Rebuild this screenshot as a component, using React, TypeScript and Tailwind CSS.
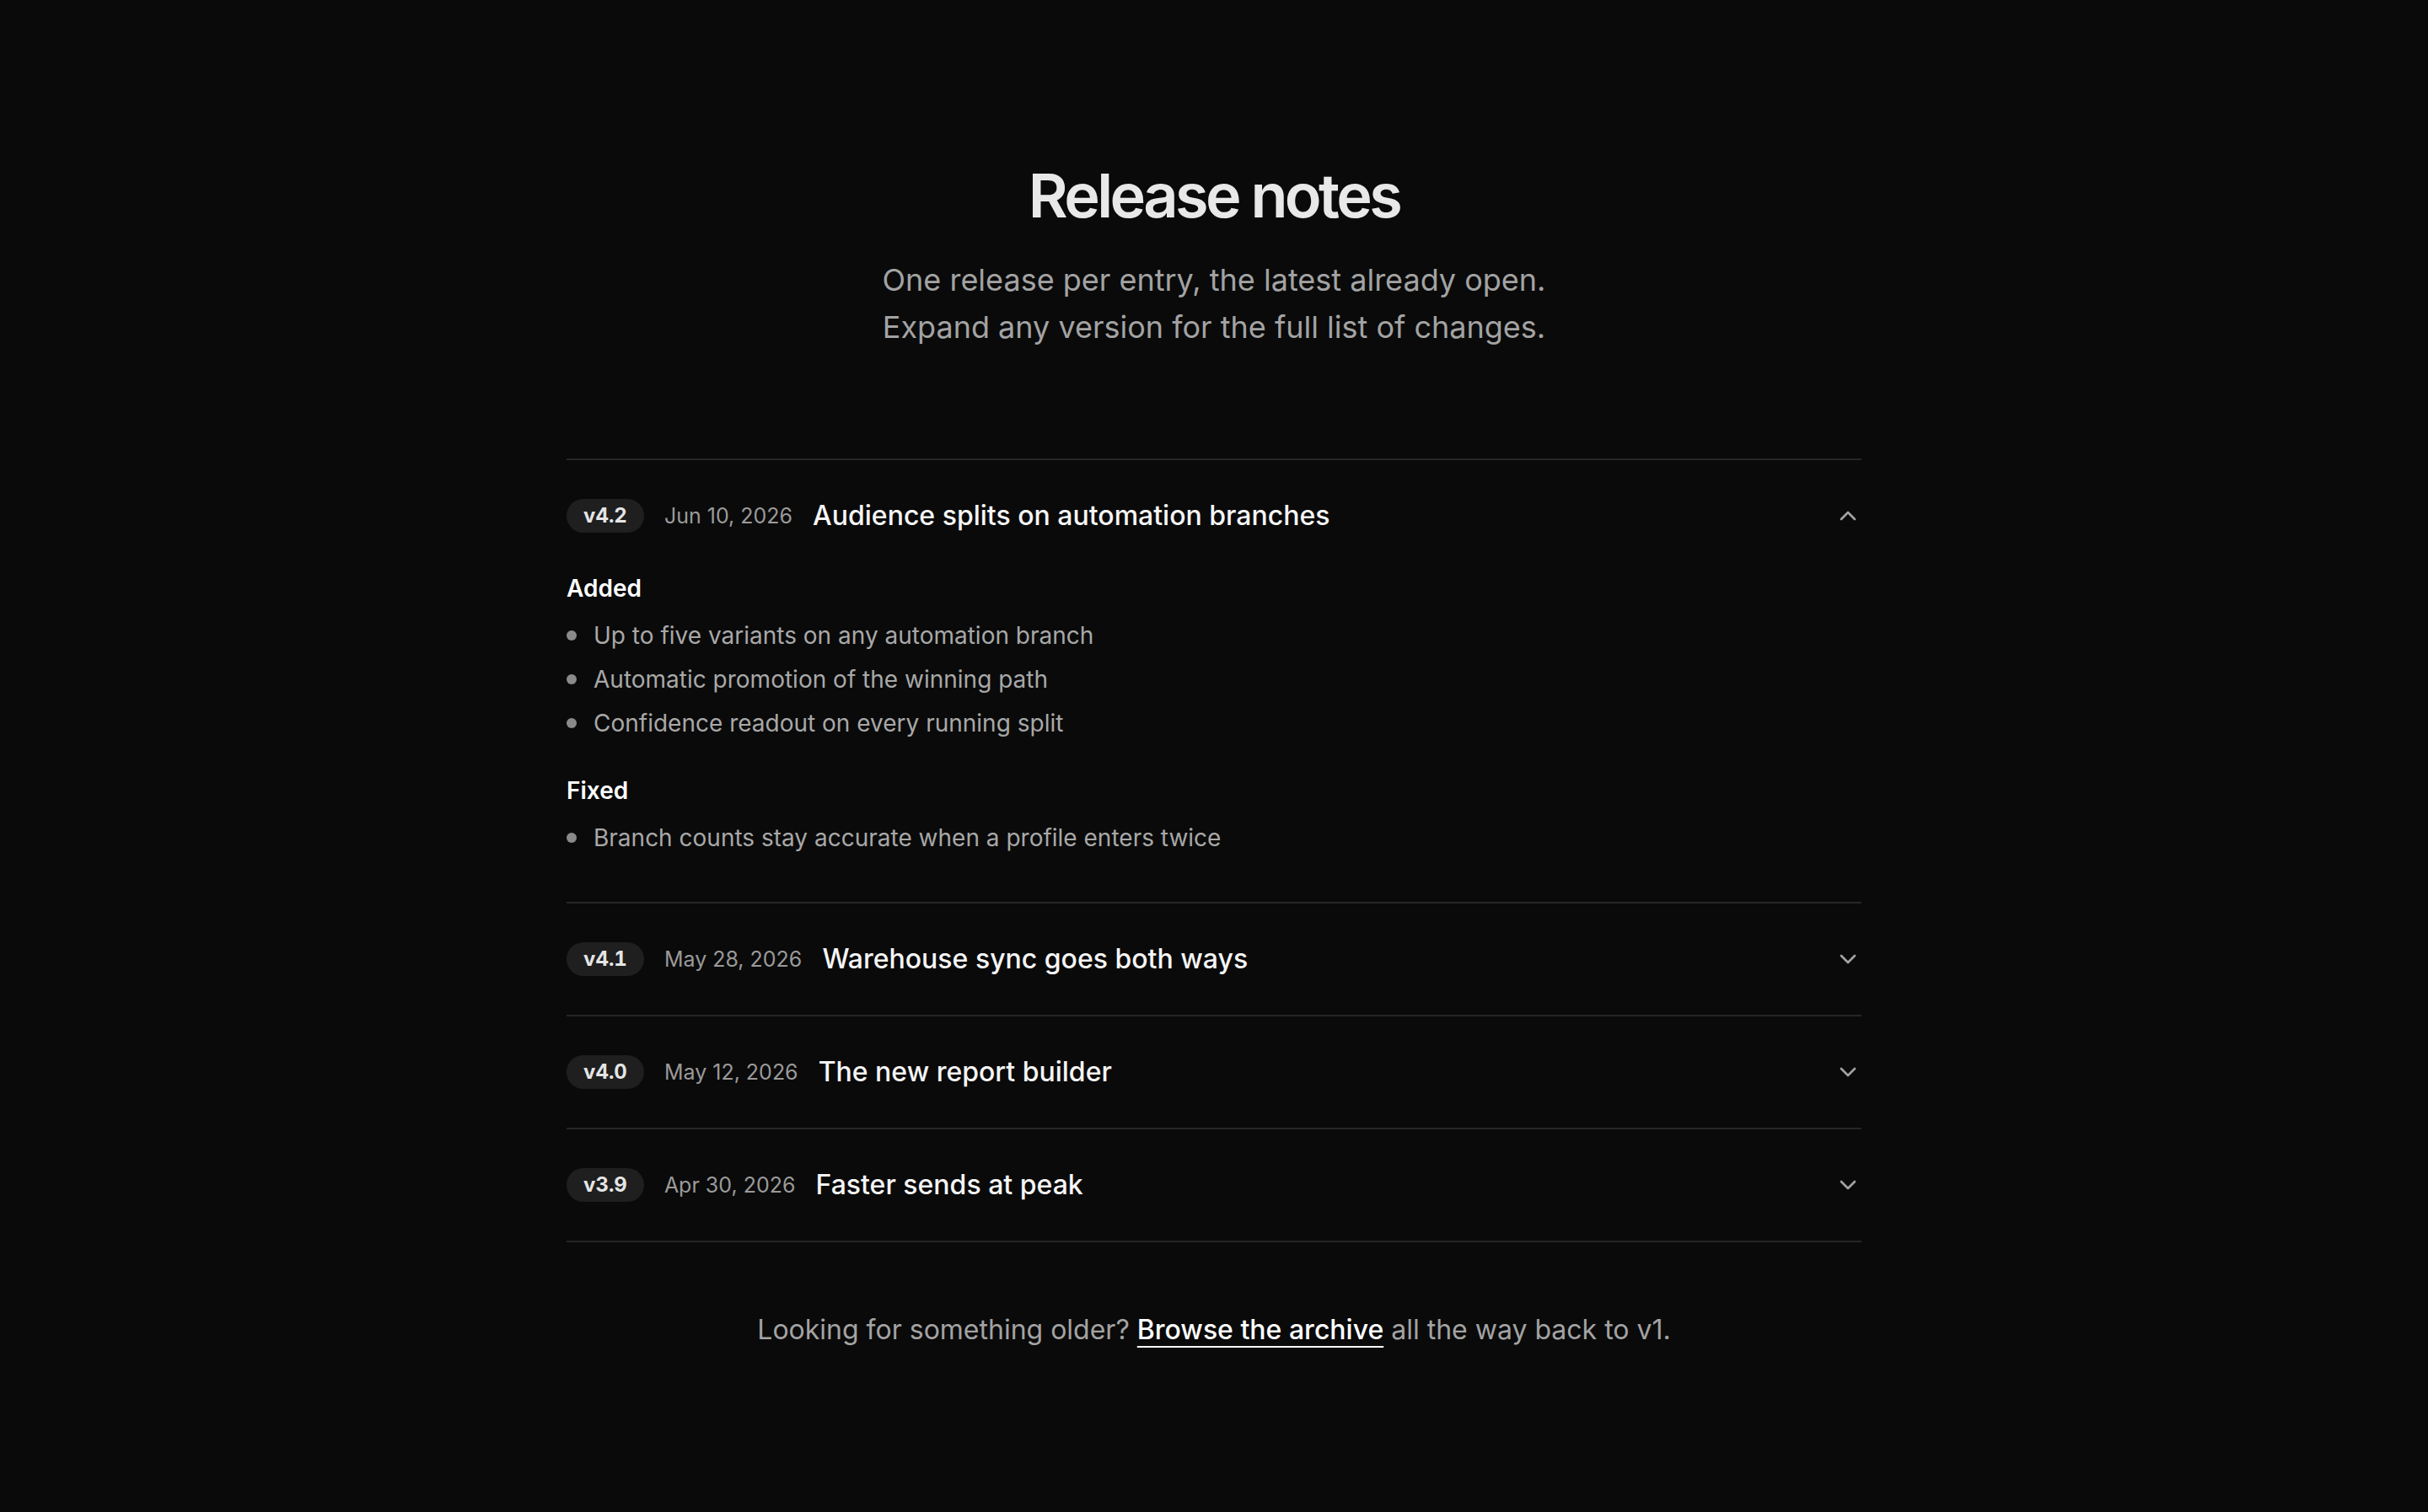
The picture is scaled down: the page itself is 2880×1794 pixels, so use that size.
import { useState } from "react";
import { ChevronDown, ChevronUp } from "lucide-react";

type Release = {
  version: string;
  date: string;
  title: string;
  groups: { label: string; items: string[] }[];
};

const releases: Release[] = [
  {
    version: "v4.2",
    date:    "Jun 10, 2026",
    title:   "Audience splits on automation branches",
    groups: [
      {
        label: "Added",
        items: [
          "Up to five variants on any automation branch",
          "Automatic promotion of the winning path",
          "Confidence readout on every running split",
        ],
      },
      {
        label: "Fixed",
        items: ["Branch counts stay accurate when a profile enters twice"],
      },
    ],
  },
  { version: "v4.1", date: "May 28, 2026", title: "Warehouse sync goes both ways", groups: [] },
  { version: "v4.0", date: "May 12, 2026", title: "The new report builder", groups: [] },
  { version: "v3.9", date: "Apr 30, 2026", title: "Faster sends at peak", groups: [] },
];

export default function App() {
  const [open, setOpen] = useState<string | null>("v4.2");

  return (
    <div className="min-h-screen bg-[#0a0a0a] font-['Inter',sans-serif] text-neutral-100 antialiased">
      <div className="mx-auto max-w-[1536px] pt-48 pb-40">
        <header className="text-center">
          <h1 className="text-[72px] leading-[80px] font-semibold tracking-tighter text-[#e8e8e8]">
            Release notes
          </h1>
          <p className="mt-8 text-[36px] leading-[56px] text-[#a3a3a3]">
            One release per entry, the latest already open.
            <br />
            Expand any version for the full list of changes.
          </p>
        </header>

        <div className="mt-32 border-t-2 border-[#262626]">
          {releases.map(r => {
            const isOpen = open === r.version;
            return (
              <div key={r.version} className="border-b-2 border-[#262626]">
                <button
                  onClick={() => setOpen(isOpen ? null : r.version)}
                  className="flex w-full items-center gap-6 py-[42px] text-left"
                >
                  <span className="rounded-full bg-[#1f1f1f] px-5 py-1 text-[24px] leading-8 font-bold tabular-nums text-[#e5e5e5]">
                    {r.version}
                  </span>
                  <span className="text-[25px] leading-8 text-[#9a9a9a]">{r.date}</span>
                  <span className="text-[32px] leading-[48px] font-medium text-[#f5f5f5]">{r.title}</span>
                  <span className="ml-auto text-[#a3a3a3]">
                    {isOpen ? (
                      <ChevronUp className="size-8" strokeWidth={2} />
                    ) : (
                      <ChevronDown className="size-8" strokeWidth={2} />
                    )}
                  </span>
                </button>

                {isOpen && r.groups.length > 0 && (
                  <div className="space-y-10 pb-14">
                    {r.groups.map(g => (
                      <div key={g.label}>
                        <h3 className="mb-4 text-[28px] leading-10 font-semibold text-white">{g.label}</h3>
                        <ul className="space-y-3">
                          {g.items.map(item => (
                            <li
                              key={item}
                              className="flex items-start gap-5 text-[28px] leading-10 text-[#a8a8a8]"
                            >
                              <span className="mt-[14px] size-3 shrink-0 rounded-full bg-[#8a8a8a]" />
                              {item}
                            </li>
                          ))}
                        </ul>
                      </div>
                    ))}
                  </div>
                )}
              </div>
            );
          })}
        </div>

        <p className="mt-20 text-center text-[32px] leading-[48px] text-[#a3a3a3]">
          Looking for something older?{" "}
          <a
            href="#"
            className="font-medium text-white underline decoration-2 underline-offset-8"
          >
            Browse the archive
          </a>{" "}
          all the way back to v1.
        </p>
      </div>
    </div>
  );
}
